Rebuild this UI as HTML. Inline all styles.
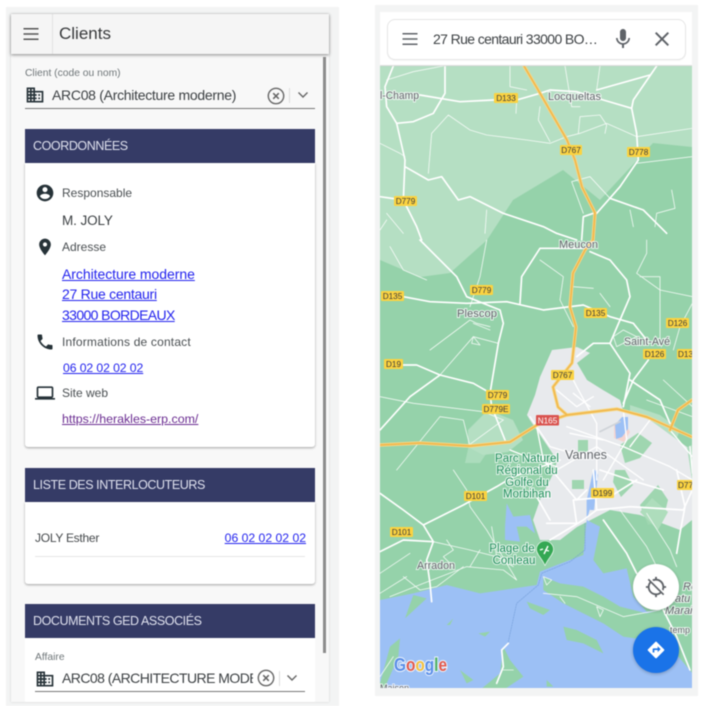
<!DOCTYPE html>
<html><head><meta charset="utf-8">
<style>
html,body{margin:0;padding:0;width:702px;height:706px;overflow:hidden;background:#fff}
body{font-family:"Liberation Sans","DejaVu Sans",sans-serif;position:relative}
#w{position:absolute;left:0;top:0;width:702px;height:706px;filter:blur(.4px);overflow:hidden}
.a{position:absolute;white-space:nowrap}
.h{position:absolute;background:#353b66;color:#dfe1ee;font-size:12.5px;letter-spacing:-.42px;line-height:34px;padding-left:8px;box-sizing:border-box;left:25px;width:290px}
.c{position:absolute;background:#fff;left:25px;width:290px;border-radius:0 0 3px 3px;box-shadow:0 1px 2px rgba(0,0,0,.35)}
.l{color:#2222ee;text-decoration:underline}
.t{color:#4a4f52;font-size:12px}
svg.i{position:absolute;fill:#263238}
.map text{font-family:"Liberation Sans",sans-serif}
.lb{font-size:11px;fill:#5f6368;paint-order:stroke;stroke:#fff;stroke-width:2px;stroke-opacity:.75}
.gl{font-size:11.5px;fill:#1e8e5a;paint-order:stroke;stroke:#fff;stroke-width:2px;stroke-opacity:.75;text-anchor:middle}
</style></head><body><div id="w">

<!-- LEFT PANEL -->
<div class="a" style="left:6px;top:7px;width:333px;height:699px;background:#f3f4f4"></div>
<div class="a" style="left:11px;top:14px;width:318px;height:688px;background:#f8f8f8;box-shadow:0 0 2px rgba(0,0,0,.15)"></div>
<div class="a" style="left:323px;top:57px;width:2.5px;height:596px;background:#8c8c8c"></div>
<div class="a" style="left:11px;top:14px;width:318px;height:40px;background:#f5f5f5;box-shadow:0 1px 3px rgba(0,0,0,.45)"></div>
<div class="a" style="left:52px;top:14px;width:1px;height:40px;background:#e3e3e3"></div>
<svg class="i" style="left:21px;top:22px;fill:#555" width="20" height="24" viewBox="0 0 24 24" preserveAspectRatio="none"><path d="M3 18h18v-1.500H3V18zm0-5.200h18v-1.500H3v1.500zM3 6v1.500h18V6H3z"/></svg>
<div class="a" style="left:59px;top:23px;font-size:17px;line-height:22px;color:#37393b">Clients</div>

<div class="a" style="left:25px;top:67px;font-size:10.3px;line-height:13px;color:#6f7679">Client (code ou nom)</div>
<svg class="i" style="left:25px;top:85px" width="20" height="20" viewBox="0 0 24 24"><path d="M12 7V3H2v18h20V7H12zM6 19H4v-2h2v2zm0-4H4v-2h2v2zm0-4H4V9h2v2zm0-4H4V5h2v2zm4 12H8v-2h2v2zm0-4H8v-2h2v2zm0-4H8V9h2v2zm0-4H8V5h2v2zm10 12h-8v-2h2v-2h-2v-2h2v-2h-2V9h8v10zm-2-8h-2v2h2v-2zm0 4h-2v2h2v-2z"/></svg>
<div class="a" style="left:52px;top:86px;font-size:14px;letter-spacing:-.29px;line-height:18px;color:#3c4043">ARC08 (Architecture moderne)</div>
<svg class="a" style="left:267px;top:87px" width="18" height="18" viewBox="0 0 18 18"><circle cx="9" cy="9" r="7.700" fill="none" stroke="#666" stroke-width="1.400"/><path d="M6.200 6.200l5.600 5.600M11.800 6.200l-5.600 5.600" stroke="#666" stroke-width="1.500"/></svg>
<div class="a" style="left:289px;top:88px;width:1px;height:15px;background:#ddd"></div>
<svg class="a" style="left:297px;top:91px" width="12" height="8" viewBox="0 0 12 8"><path d="M1.500 1.500L6 6l4.500-4.500" fill="none" stroke="#666" stroke-width="1.400"/></svg>
<div class="a" style="left:25px;top:107.5px;width:290px;height:1px;background:#777"></div>

<div class="h" style="top:129px;height:34px">COORDONNÉES</div>
<div class="c" style="top:163px;height:284px"></div>
<svg class="i" style="left:35px;top:183px" width="20" height="20" viewBox="0 0 24 24"><path d="M12 2C6.480 2 2 6.480 2 12s4.480 10 10 10 10-4.480 10-10S17.520 2 12 2zm0 3c1.660 0 3 1.340 3 3s-1.340 3-3 3-3-1.340-3-3 1.340-3 3-3zm0 14.200c-2.500 0-4.710-1.280-6-3.220.03-1.990 4-3.080 6-3.080 1.990 0 5.970 1.090 6 3.080-1.290 1.940-3.500 3.220-6 3.220z"/></svg>
<div class="a t" style="left:62px;top:186px;line-height:15px">Responsable</div>
<div class="a" style="left:62px;top:213px;font-size:13.5px;letter-spacing:-.1px;line-height:16px;color:#3c4043">M. JOLY</div>
<svg class="i" style="left:35px;top:237px" width="20" height="20" viewBox="0 0 24 24"><path d="M12 2C8.130 2 5 5.130 5 9c0 5.250 7 13 7 13s7-7.750 7-13c0-3.870-3.130-7-7-7zm0 9.500c-1.380 0-2.500-1.120-2.500-2.500s1.120-2.500 2.500-2.500 2.500 1.120 2.500 2.500-1.120 2.500-2.500 2.500z"/></svg>
<div class="a t" style="left:62px;top:240px;line-height:15px">Adresse</div>
<div class="a l" style="left:62px;top:264px;font-size:14px;line-height:20.3px;letter-spacing:-.05px">Architecture moderne</div>
<div class="a l" style="left:62px;top:284.3px;font-size:14px;line-height:20.3px;letter-spacing:-.27px">27 Rue centauri</div>
<div class="a l" style="left:62px;top:304.6px;font-size:14px;line-height:20.3px;letter-spacing:-.62px">33000 BORDEAUX</div>
<svg class="i" style="left:35px;top:332px" width="20" height="20" viewBox="0 0 24 24"><path d="M6.620 10.790c1.440 2.830 3.760 5.140 6.590 6.590l2.200-2.200c.27-.27.67-.36 1.020-.24 1.120.37 2.330.57 3.570.57.55 0 1 .45 1 1V20c0 .55-.45 1-1 1-9.390 0-17-7.610-17-17 0-.55.45-1 1-1h3.500c.55 0 1 .45 1 1 0 1.250.2 2.450.57 3.570.11.35.03.74-.25 1.020l-2.200 2.200z"/></svg>
<div class="a t" style="left:62px;top:335px;line-height:15px;letter-spacing:.18px">Informations de contact</div>
<div class="a l" style="left:63px;top:360px;font-size:12.2px;letter-spacing:-.08px;line-height:16px">06 02 02 02 02</div>
<svg class="i" style="left:34px;top:383px" width="22" height="20" viewBox="0 0 24 24"><path d="M20 18c1.100 0 1.990-.9 1.990-2L22 6c0-1.100-.9-2-2-2H4c-1.100 0-2 .9-2 2v10c0 1.100.9 2 2 2H0v2h24v-2h-4zM4 6h16v10H4V6z"/></svg>
<div class="a t" style="left:62px;top:386px;line-height:15px">Site web</div>
<div class="a" style="left:62px;top:411px;font-size:12.4px;line-height:16px;color:#6a2c91;text-decoration:underline">https://herakles-erp.com/</div>

<div class="h" style="top:468px;height:34px">LISTE DES INTERLOCUTEURS</div>
<div class="c" style="top:502px;height:82px"></div>
<div class="a" style="left:35px;top:531px;font-size:12px;letter-spacing:-.26px;line-height:15px;color:#44484b">JOLY Esther</div>
<div class="a l" style="right:396px;top:531px;font-size:12.2px;line-height:15px">06 02 02 02 02</div>
<div class="a" style="left:35px;top:556px;width:270px;height:1px;background:#e6e6e6"></div>

<div class="h" style="top:604px;height:34px">DOCUMENTS GED ASSOCIÉS</div>
<div class="a" style="left:25px;top:638px;width:290px;height:64px;background:#fff"></div>
<div class="a" style="left:35px;top:651px;font-size:10.3px;line-height:13px;color:#6f7679">Affaire</div>
<svg class="i" style="left:35px;top:669px" width="20" height="20" viewBox="0 0 24 24"><path d="M12 7V3H2v18h20V7H12zM6 19H4v-2h2v2zm0-4H4v-2h2v2zm0-4H4V9h2v2zm0-4H4V5h2v2zm4 12H8v-2h2v2zm0-4H8v-2h2v2zm0-4H8V9h2v2zm0-4H8V5h2v2zm10 12h-8v-2h2v-2h-2v-2h2v-2h-2V9h8v10zm-2-8h-2v2h2v-2zm0 4h-2v2h2v-2z"/></svg>
<div class="a" style="left:62px;top:669px;width:191px;overflow:hidden;font-size:14px;letter-spacing:-.55px;line-height:18px;color:#3c4043">ARC08 (ARCHITECTURE MODERNE)</div>
<svg class="a" style="left:257px;top:669px" width="18" height="18" viewBox="0 0 18 18"><circle cx="9" cy="9" r="7.700" fill="none" stroke="#666" stroke-width="1.400"/><path d="M6.200 6.200l5.600 5.600M11.800 6.200l-5.600 5.600" stroke="#666" stroke-width="1.500"/></svg>
<div class="a" style="left:279px;top:671px;width:1px;height:15px;background:#ddd"></div>
<svg class="a" style="left:286px;top:674px" width="12" height="8" viewBox="0 0 12 8"><path d="M1.500 1.500L6 6l4.500-4.500" fill="none" stroke="#666" stroke-width="1.400"/></svg>
<div class="a" style="left:35px;top:691px;width:270px;height:1px;background:#777"></div>

<!-- RIGHT PANEL -->
<div class="a" style="left:375px;top:5px;width:323px;height:691px;background:#f3f4f4"></div>
<div class="a" style="left:380px;top:12px;width:312px;height:54px;background:#fff"></div>

<svg class="a map" style="left:380px;top:66px" width="312" height="622" viewBox="380 66 312 622">
<rect x="380" y="66" width="312" height="622" fill="#b5dfc3"/>
<!-- forest -->
<path d="M380 260L420 277L450 273L487 240L513 200L563 170L600 200L653 143L692 147V688H380Z" fill="#95d2aa"/>
<!-- light patches -->
<g fill="#b5dfc3">
<path d="M468 430l20-20 25 10 10 20-15 12-25 3-15-8z"/>
<path d="M470 440l20 8-10 15-15 0z" opacity=".7"/>
<path d="M630 405l30 10 20 15-10 25-20 5-20-20z"/>
<path d="M640 490l30-15 15 25-15 25-25-10z"/>
<path d="M680 450l12-5v50l-12 10z" opacity=".8"/>
</g>
<!-- city -->
<path d="M540 377L552 350L577 347L590 353L577 363L587 380L603 390L620 400L623 410L650 420L687 447L692 480V520L680 530L640 515L610 510L577 527L560 540L540 540L533 520L540 500L555 470L557 460L530 420L527 415L535 395Z" fill="#e8eaed"/>
<path d="M620 445l18-12 14 10-12 15-15 5zM640 505l18-20 10 15-5 20-15 5zM615 470l10 0 8 15-12 12-8-15zM572 480h12v9h-12zM578 440l10 0 0 12-10 0z" fill="#9fd6b0"/>
<path d="M640 512l12-14 16 14-10 18z" fill="#aeddbc"/>
<path d="M614 425l10-3 6 10-6 10-10-4z" fill="#f5d4d0"/>
<!-- water and coast -->
<g transform="translate(370 470) scale(.33333)">
<path d="M30 390L130 370L230 345L330 370L400 360L500 345L510 305L560 285L640 255L650 150L690 170L680 220L670 270L700 310L770 295L790 380L830 425L870 420L925 500L967 610V660H30Z" fill="#9cc0f5"/>
<path d="M410 100L430 140L480 135L495 190L470 170L440 170L450 215L405 210L405 170Z" fill="#9cc0f5"/>
<path d="M650 90L670 0L675 0L665 100L650 150Z" fill="#9cc0f5"/>
<g fill="#95d2aa">
<path d="M520 320L570 340L640 350L700 380L750 410L830 430L870 420L925 500L967 610L900 530L830 510L760 500L700 460L640 430L580 400L520 360Z"/>
<path d="M580 470L620 480L680 510L700 550L640 520L590 510Z"/>
<path d="M470 395L540 420L520 435L480 415Z"/>
<path d="M30 640L60 530L90 505L85 560L50 640L45 660H30Z"/>
<path d="M400 530L420 570L460 620L400 660H330L390 610Z"/>
<path d="M270 600L310 630L290 640Z"/>
<path d="M325 490L360 485L345 500Z"/>
<path d="M230 465L250 445L240 465Z"/>
<path d="M130 375L170 385L105 445Z"/>
<path d="M530 630L550 650H530Z"/>
</g>
</g>
<path d="M615 425l7-8 6 0 0 12-6 8-6 2zM590 510l3-35 3-5 2 5-4 35z" fill="#9cc0f5"/>
<!-- White roads top -->
<g transform="translate(370 0) scale(.33333)" fill="none" stroke="#fff" stroke-linecap="round" stroke-linejoin="round">
<g stroke-width="5">
<path d="M150 285L270 305L370 300L440 300L510 280L540 270L620 275L700 300L785 325"/>
<path d="M860 198L790 300L785 325L800 400L805 480L750 560L680 640"/>
<path d="M80 370L105 480L100 600L140 680L155 720"/>
<path d="M225 198L225 280L190 340L130 365L80 370L50 320L45 260L70 198"/>
<path d="M30 590L100 600M105 500L175 540L215 530L265 600L300 590L400 640L520 680L560 700L620 720"/>
<path d="M720 595L820 630L890 700"/>
<path d="M635 720L640 650L670 640"/>
<path d="M680 270L840 225"/>
</g>
<g stroke-width="2.500" opacity=".85">
<path d="M50 240L130 215L220 198"/>
<path d="M175 520L185 400L235 345L300 390L350 405L470 420L540 430L590 410L630 400L710 370L800 410L967 385"/>
<path d="M30 430L90 460L105 470"/>
<path d="M800 490L967 470"/>
<path d="M585 198L605 320L630 320M420 198L420 260L470 270"/>
<path d="M510 320L505 360L540 425M630 350L625 400M630 350L690 345L710 375L705 400"/>
<path d="M605 545L660 530L720 595M605 545L640 640"/>
<path d="M690 198L680 270M905 570L915 625L860 640L855 680M780 630L790 680"/>
<path d="M50 660L30 690M50 640L100 700M350 630L345 700M440 300L438 340"/>
</g>
</g>
<!-- White roads middle -->
<g transform="translate(370 240) scale(.33333)" fill="none" stroke="#fff" stroke-linecap="round" stroke-linejoin="round">
<g stroke-width="5">
<path d="M150 0L200 50L260 110L290 170L390 210L400 250L385 310L360 460L365 500L405 600"/>
<path d="M100 170L180 185L290 190L410 185L520 210L640 195L720 230L790 250L830 300"/>
<path d="M450 190L455 110L510 25L640 25"/>
<path d="M660 35L720 60L770 120L780 170L750 240L720 310L780 400L760 500"/>
<path d="M30 570L120 470L210 405L140 375L100 375"/>
<path d="M210 405L310 430L380 470"/>
<path d="M720 310L670 310L620 350"/>
<path d="M835 360L790 420L760 490"/>
<path d="M780 420L870 480L900 550"/>
</g>
<g stroke-width="2.500" opacity=".85">
<path d="M210 405L310 290L385 310"/>
<path d="M180 330L300 240L320 250L360 260"/>
<path d="M30 470L130 490L340 515L400 540"/>
<path d="M350 0L330 110L300 200M830 0L830 40L800 100L870 150L967 170"/>
<path d="M60 20L100 90L170 120M510 60L580 110L570 180L610 260"/>
<path d="M967 190L930 260L910 330M810 110L870 110L870 300"/>
<path d="M80 690L210 530L280 540L300 620M290 620L400 540"/>
<path d="M730 290L760 270L800 290L740 320ZM310 250L360 270M310 290L330 315L305 310Z"/>
<path d="M880 420L967 500M830 480L967 530"/>
<path d="M690 160L720 200M610 140L670 145"/>
</g>
<!-- city roads -->
<g stroke-width="4">
<path d="M600 400L620 440L680 550L680 720"/>
<path d="M560 450L620 500L670 470M610 460L660 500"/>
<path d="M500 560L520 660L570 720M590 560L760 620L900 680L967 720"/>
<path d="M680 620L820 720M680 620L560 690M760 510L770 600L700 720"/>
<path d="M480 530L540 620L640 650M600 580L700 600M840 540L780 620"/>
<path d="M420 630L470 650L560 680"/>
<path d="M900 570L967 650M960 620L967 700"/>
</g>
<path d="M690 575L750 545" stroke="#cfd3d8" stroke-width="5"/>
</g>
<!-- White roads bottom -->
<g transform="translate(370 470) scale(.33333)" fill="none" stroke="#fff" stroke-linecap="round" stroke-linejoin="round">
<g stroke-width="5">
<path d="M30 70L100 120L160 165L280 105L380 50L430 20L570 -30"/>
<path d="M160 165L190 215L170 270L180 340L185 395"/>
<path d="M30 245L100 210L190 215"/>
<path d="M540 210L640 150L680 120L670 0"/>
<path d="M680 120L780 110L940 120L967 60M920 0L945 110L930 190L920 250"/>
<path d="M700 150L770 250L800 310"/>
<path d="M530 160L620 160L610 90L720 80L800 30"/>
<path d="M500 80L540 150M570 30L620 90L650 60M690 0L780 30L880 60"/>
<path d="M415 520L395 540L400 590L380 640"/>
<path d="M880 420L920 500L960 600"/>
</g>
<g stroke-width="2.500" opacity=".85">
<path d="M250 0L290 60L300 110L350 180L440 330L400 300L290 290L160 340L60 380"/>
<path d="M190 215L300 240L380 260L430 290M230 210L250 240L220 260L250 290"/>
<path d="M120 250L30 310M100 320L150 360L200 350L280 290M30 370L110 320"/>
<path d="M330 240L300 290M365 170L380 260"/>
<path d="M520 320L545 330L530 345ZM570 380L585 400M680 410L700 420L690 440Z"/>
<path d="M520 370L620 380L760 440L870 420"/>
<path d="M750 120L830 230L880 330M830 130L900 240L920 290"/>
<path d="M400 600L430 600M30 620L70 560"/>
</g>
<path d="M645 160L645 240L600 275L515 310L505 345L440 400L415 515" fill="none" stroke="#6f9ad6" stroke-width="2" stroke-dasharray="5 3" opacity=".8"/>
</g>
<!-- highways -->
<g fill="none" stroke-linecap="round" stroke-linejoin="round">
<g stroke="#f6d98a" stroke-width="3.400">
<path d="M524 66L537 88L567 140L575 160L582 187L595 213L593 240L585 250L573 273L570 307L576 327L572 363L553 387L558 407L567 415"/>
<path d="M380 445L420 443L470 446L510 442L537 425L567 415L617 409L647 417L692 437"/>
<path d="M670 430L678 410L692 400"/>
</g>
<g stroke="#f2b84c" stroke-width="1.700">
<path d="M524 66L537 88L567 140L575 160L582 187L595 213L593 240L585 250L573 273L570 307L576 327L572 363L553 387L558 407L567 415"/>
<path d="M380 445L420 443L470 446L510 442L537 425L567 415L617 409L647 417L692 437"/>
<path d="M670 430L678 410L692 400"/>
</g>
</g>
<!-- shields -->
<g font-size="8.200" text-anchor="middle" fill="#3c3c3c">
<g fill="#fbd341">
<rect x="494" y="93" width="24" height="10" rx="1"/><rect x="560" y="145" width="22" height="10" rx="1"/><rect x="627" y="147" width="23" height="10" rx="1"/><rect x="394" y="196" width="23" height="10" rx="1"/><rect x="381" y="291" width="23" height="10" rx="1"/><rect x="470" y="285" width="23" height="10" rx="1"/><rect x="584" y="308" width="23" height="10" rx="1"/><rect x="666" y="318" width="23" height="10" rx="1"/><rect x="643" y="349" width="23" height="10" rx="1"/><rect x="677" y="349" width="20" height="10" rx="1"/><rect x="384" y="359" width="19" height="10" rx="1"/><rect x="551" y="370" width="23" height="10" rx="1"/><rect x="486" y="390" width="23" height="10" rx="1"/><rect x="482" y="404" width="28" height="10" rx="1"/><rect x="464" y="491" width="23" height="10" rx="1"/><rect x="591" y="488" width="23" height="10" rx="1"/><rect x="677" y="480" width="20" height="10" rx="1"/><rect x="390" y="527" width="23" height="10" rx="1"/>
</g>
<text x="506" y="101">D133</text><text x="571" y="153">D767</text><text x="638.500" y="155">D778</text><text x="405.500" y="204">D779</text><text x="392.500" y="299">D135</text><text x="481.500" y="293">D779</text><text x="595.500" y="316">D135</text><text x="677.500" y="326">D126</text><text x="654.500" y="357">D126</text><text x="678" y="357" text-anchor="start">D135</text><text x="393.500" y="367">D19</text><text x="562.500" y="378">D767</text><text x="497.500" y="398">D779</text><text x="496" y="412">D779E</text><text x="475.500" y="499">D101</text><text x="602.500" y="496">D199</text><text x="678" y="488" text-anchor="start">D778</text><text x="401.500" y="535">D101</text>
<rect x="536" y="415" width="23" height="10.500" rx="1" fill="#d9534f"/>
<text x="547.500" y="423.500" fill="#fff">N165</text>
</g>
<!-- labels -->
<text class="lb" x="380" y="99" textLength="39" lengthAdjust="spacingAndGlyphs">l-Champ</text>
<text class="lb" x="548" y="100" textLength="53" lengthAdjust="spacingAndGlyphs">Locqueltas</text>
<text class="lb" x="559" y="248" textLength="39" lengthAdjust="spacingAndGlyphs">Meucon</text>
<text class="lb" x="457" y="317" textLength="40" lengthAdjust="spacingAndGlyphs">Plescop</text>
<text class="lb" x="624" y="345" textLength="46" lengthAdjust="spacingAndGlyphs">Saint-Avé</text>
<text class="lb" x="565" y="459" style="font-size:13px" textLength="42" lengthAdjust="spacingAndGlyphs">Vannes</text>
<text class="gl" x="527" y="462">Parc Naturel</text>
<text class="gl" x="527" y="474">Régional du</text>
<text class="gl" x="527" y="486">Golfe du</text>
<text class="gl" x="527" y="497.500">Morbihan</text>
<text class="lb" x="417" y="569" textLength="38" lengthAdjust="spacingAndGlyphs">Arradon</text>
<text class="gl" x="512" y="552">Plage de</text>
<text class="gl" x="514" y="564">Conleau</text>
<text class="lb" x="683" y="590" style="font-style:italic">Re</text>
<text class="lb" x="675" y="602" style="font-style:italic">atu</text>
<text class="lb" x="665" y="614" style="font-style:italic">Marai</text>
<text class="lb" style="font-size:9px" x="670" y="633">temp</text>
<text class="lb" style="font-size:9px" x="380" y="691">Maison</text>
<!-- Pin -->
<path d="M545 541a8.500 8.500 0 0 1 8.500 8.500c0 5-5 8-8.500 16c-3.500-8-8.500-11-8.500-16a8.500 8.500 0 0 1 8.500-8.500z" fill="#34a853" stroke="#fff" stroke-width=".6"/>
<path d="M540 550l3-1M548 546l-4 8M549 551l-4-1" stroke="#fff" stroke-width="1.400" fill="none"/>
<!-- Google -->
<text x="394" y="671" style="font-size:18.500px;font-weight:bold;paint-order:stroke;stroke:#fff;stroke-width:2px;stroke-opacity:.8" textLength="53" lengthAdjust="spacingAndGlyphs"><tspan fill="#5a8ee8">G</tspan><tspan fill="#e25a4d">o</tspan><tspan fill="#f4c13f">o</tspan><tspan fill="#5a8ee8">g</tspan><tspan fill="#4caf62">l</tspan><tspan fill="#e25a4d">e</tspan></text>
</svg>
<div class="a" style="left:380px;top:65px;width:312px;height:2px;background:linear-gradient(#bbb,transparent);opacity:.6"></div>

<!-- search bar -->
<div class="a" style="left:387px;top:19px;width:297px;height:38.500px;border:1px solid #e6e6e6;border-radius:8px;background:#fff;box-shadow:0 1px 1px rgba(0,0,0,.04)"></div>
<svg class="a" style="left:400px;top:27px;fill:#5f6368" width="20" height="24" viewBox="0 0 24 24" preserveAspectRatio="none"><path d="M3 18h18v-1.500H3V18zm0-5.200h18v-1.500H3v1.500zM3 6v1.500h18V6H3z"/></svg>
<div class="a" style="left:433px;top:29px;font-size:14px;letter-spacing:-.62px;line-height:20px;color:#3c4043">27 Rue centauri 33000 BO…</div>
<svg class="a" style="left:611px;top:27px;fill:#5f6368" width="24" height="24" viewBox="0 0 24 24"><path d="M12 14c1.660 0 2.990-1.340 2.990-3L15 5c0-1.660-1.340-3-3-3S9 3.340 9 5v6c0 1.660 1.340 3 3 3zm5.300-3c0 3-2.540 5.100-5.300 5.100S6.700 14 6.700 11H5c0 3.410 2.720 6.230 6 6.720V21h2v-3.280c3.280-.48 6-3.300 6-6.720h-1.700z"/></svg>
<svg class="a" style="left:650px;top:27px;fill:#5f6368" width="24" height="24" viewBox="0 0 24 24"><path d="M19 6.410L17.590 5 12 10.590 6.410 5 5 6.410 10.590 12 5 17.590 6.410 19 12 13.410 17.590 19 19 17.590 13.410 12z"/></svg>

<!-- FABs -->
<div class="a" style="left:633px;top:564px;width:46px;height:46px;border-radius:50%;background:#fff;box-shadow:0 1px 3px rgba(0,0,0,.25)"></div>
<svg class="a" style="left:645px;top:576px;fill:#5f6368" width="22" height="22" viewBox="0 0 24 24"><path d="M20.940 11c-.46-4.170-3.770-7.480-7.940-7.940V1h-2v2.060c-1.130.12-2.190.46-3.160.97l1.500 1.500C10.160 5.190 11.060 5 12 5c3.870 0 7 3.130 7 7 0 .94-.19 1.840-.52 2.650l1.500 1.500c.5-.96.84-2.020.97-3.150H23v-2h-2.060zM3 4.270l2.040 2.040C3.970 7.620 3.260 9.230 3.060 11H1v2h2.060c.46 4.170 3.770 7.480 7.940 7.940V23h2v-2.060c1.770-.2 3.380-.91 4.690-1.980L19.730 21 21 19.730 4.270 3 3 4.270zm13.270 13.270C15.090 18.450 13.610 19 12 19c-3.870 0-7-3.130-7-7 0-1.610.55-3.090 1.460-4.270l9.810 9.810z"/></svg>
<div class="a" style="left:633px;top:627px;width:46px;height:46px;border-radius:50%;background:#1a73e8;box-shadow:0 1px 3px rgba(0,0,0,.25)"></div>
<svg class="a" style="left:646px;top:640px;fill:#fff" width="20" height="20" viewBox="0 0 24 24"><path d="M21.710 11.290l-9-9c-.39-.39-1.020-.39-1.410 0l-9 9c-.39.39-.39 1.020 0 1.410l9 9c.39.39 1.020.39 1.410 0l9-9c.39-.38.39-1.010 0-1.410zM14 14.500V12h-4v3H8v-4c0-.55.45-1 1-1h5V7.500l3.500 3.500-3.500 3.500z"/></svg>
</div></body></html>
